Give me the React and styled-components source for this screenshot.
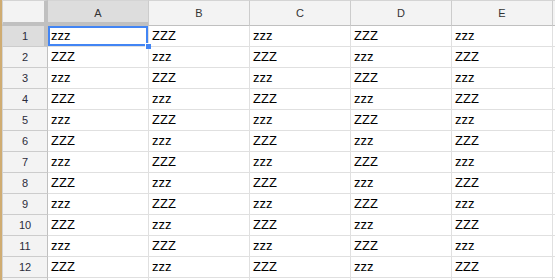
import styled, { createGlobalStyle } from "styled-components";

const COLUMNS = ["A", "B", "C", "D", "E"];
const ROW_COUNT = 13;

const GlobalStyle = createGlobalStyle`
  html, body {
    margin: 0;
    padding: 0;
    background: #ffffff;
    overflow: hidden;
  }
  body {
    font-family: "Liberation Sans", Arial, sans-serif;
  }
`;

const Sheet = styled.div`
  display: grid;
  grid-template-columns: 46px repeat(5, 101px) 1fr;
  grid-auto-rows: 21px;
  grid-template-rows: 26px;
  border-left: 2px solid #cfac72;
  width: 553px;
  height: 280px;
  overflow: hidden;
`;

const Corner = styled.div`
  box-sizing: border-box;
  background: #f3f3f3;
  border-top: 1px solid #d4d4d4;
  border-left: 1px solid #d4d4d4;
  border-right: 4px solid #c0c0c0;
  border-bottom: 4px solid #c0c0c0;
`;

const ColHeader = styled.div`
  box-sizing: border-box;
  display: flex;
  align-items: center;
  justify-content: center;
  background: ${(p) => (p.$selected ? "#dddddd" : "#f3f3f3")};
  border-top: 1px solid #d4d4d4;
  border-right: 1px solid #cccccc;
  border-bottom: ${(p) => (p.$selected ? "4px" : "1px")} solid #c0c0c0;
  padding-top: ${(p) => (p.$selected ? "3px" : "0")};
  font-size: 11px;
  color: #333333;
`;

const RowHeader = styled.div`
  box-sizing: border-box;
  display: flex;
  align-items: center;
  justify-content: center;
  background: ${(p) => (p.$selected ? "#dddddd" : "#f3f3f3")};
  border-left: 1px solid #d4d4d4;
  border-right: ${(p) => (p.$selected ? "4px" : "1px")} solid #c0c0c0;
  border-bottom: 1px solid #cccccc;
  padding-left: ${(p) => (p.$selected ? "3px" : "0")};
  font-size: 11px;
  color: #2b2b3a;
`;

const Cell = styled.div`
  box-sizing: border-box;
  position: relative;
  border-right: 1px solid #e0e0e0;
  border-bottom: 1px solid #e0e0e0;
  padding-left: 3px;
  font-size: 13px;
  line-height: 20px;
  color: #000000;
  white-space: nowrap;
`;

const Selection = styled.div`
  position: absolute;
  z-index: 2;
  left: 0;
  top: 0;
  width: 100px;
  height: 20px;
  box-sizing: border-box;
  border: 2px solid #4285f4;
  pointer-events: none;
`;

const FillHandle = styled.div`
  position: absolute;
  left: 95px;
  top: 15px;
  width: 6px;
  height: 6px;
  box-sizing: border-box;
  background: #4285f4;
  border-left: 1px solid #ffffff;
  border-top: 1px solid #ffffff;
`;

export default function App() {
  const rows = Array.from({ length: ROW_COUNT }, (_, i) => i + 1);

  return (
    <>
      <GlobalStyle />
      <Sheet>
        <Corner />
        {COLUMNS.map((c, i) => (
          <ColHeader key={c} $selected={i === 0}>
            {c}
          </ColHeader>
        ))}
        <ColHeader />

        {rows.map((r) => (
          <Row key={r} row={r} />
        ))}
      </Sheet>
    </>
  );
}

function Row({ row }) {
  const last = row === ROW_COUNT;
  return (
    <>
      <RowHeader $selected={row === 1}>{last ? "" : row}</RowHeader>
      {COLUMNS.map((c, i) => {
        const text = (row + i) % 2 === 1 ? "zzz" : "ZZZ";
        const selected = row === 1 && i === 0;
        return (
          <Cell key={c}>
            {last ? "" : text}
            {selected && (
              <Selection>
                <FillHandle />
              </Selection>
            )}
          </Cell>
        );
      })}
      <Cell />
    </>
  );
}
